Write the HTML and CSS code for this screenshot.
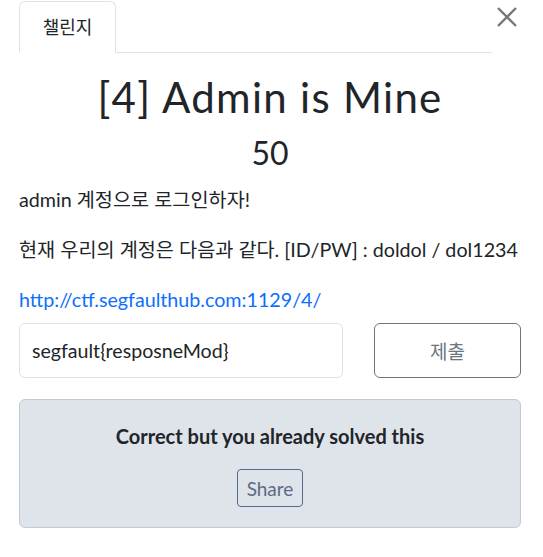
FILE: index.html
```html
<!DOCTYPE html>
<html lang="ko">
<head>
<meta charset="utf-8">
<link rel="stylesheet" href="styles.css">
</head>
<body>
<div class="modal">
  <div class="tabbar">
    <ul class="tabs">
      <li class="tab">챌린지</li>
    </ul>
    <button class="close" aria-label="Close">
      <svg width="22" height="22" viewBox="0 0 22 22"><path d="M2 2 L20 20 M20 2 L2 20" stroke="#777" stroke-width="2.4" fill="none"/></svg>
    </button>
  </div>
  <h2 class="title">[4] Admin is Mine</h2>
  <h3 class="points">50</h3>
  <div class="desc">
    <p>admin 계정으로 로그인하자!</p>
    <p>현재 우리의 계정은 다음과 같다. [ID/PW] : doldol / dol1234</p>
    <p><a href="#">http://ctf.segfaulthub.com:1129/4/</a></p>
  </div>
  <div class="submit-row">
    <div class="input">segfault{resposneMod}</div>
    <button class="submit">제출</button>
  </div>
  <div class="alert">
    <strong>Correct but you already solved this</strong>
    <button class="share">Share</button>
  </div>
</div>
</body>
</html>
```
FILE: styles.css
```css
* { box-sizing: border-box; }
html, body { margin: 0; padding: 0; background: #fff; }
body {
  font-family: Lato, "Noto Sans CJK KR", sans-serif;
  color: #212529;
  font-size: 16px;
}
.modal { padding: 1px 22px 0 19px; }
.tabbar { display: flex; align-items: flex-start; }
.tabs {
  list-style: none; margin: 0; padding: 0;
  flex: 0 0 473px;
  border-bottom: 1px solid #dee2e6;
  display: flex;
}
.tab {
  width: 97px; height: 52px;
  margin-bottom: -1px;
  border: 1px solid #dee2e6;
  border-bottom-color: #fff;
  border-radius: 6px 6px 0 0;
  display: flex; align-items: center; justify-content: center;
  font-size: 18px;
  padding-bottom: 2px;
  color: #212529;
}
.close {
  border: 0; background: none; padding: 0;
  margin: 5px 0 0 4px;
  width: 22px; height: 22px;
  display: flex;
}
.title {
  margin: 19px 0 0;
  text-align: center;
  font-weight: 400;
  font-size: 42px;
  letter-spacing: 1.3px;
  line-height: 50px;
}
.points {
  margin: 12px 0 0;
  text-align: center;
  font-weight: 400;
  font-size: 32px;
  line-height: 38px;
}
.desc { margin-top: 14px; }
.desc p { margin: 0 0 22px; line-height: 28px; font-size: 19.7px; }
.desc a { color: #0d6efd; text-decoration: none; }
.desc p:last-child { margin-bottom: 0; }
.submit-row {
  display: flex; gap: 31px;
  margin-top: 9px;
}
.input {
  flex: 0 0 324px; height: 55px;
  border: 1px solid #dee2e6;
  border-radius: 6px;
  padding: 0 12px;
  display: flex; align-items: center;
  font-size: 19.6px;
}
.submit {
  flex: 0 0 147px; height: 55px;
  border: 1px solid #6c757d;
  border-radius: 6px;
  background: #fff;
  color: #6c757d;
  font-family: Lato, "Noto Sans CJK KR", sans-serif;
  font-size: 19px;
}
.alert {
  margin-top: 21px;
  height: 129px;
  background: #dfe3ea;
  border: 1px solid #c4cad5;
  border-radius: 6px;
  display: flex; flex-direction: column; align-items: center;
  padding-top: 23px;
}
.alert strong {
  font-size: 20px; font-weight: 700; line-height: 26px;
  color: #212529;
}
.share {
  margin-top: 20px;
  height: 38px; width: 66px;
  border: 1px solid #566b8b;
  border-radius: 4px;
  background: transparent;
  color: #5b6b85;
  font-family: Lato, sans-serif;
  font-size: 19px;
  padding: 0;
}
```
